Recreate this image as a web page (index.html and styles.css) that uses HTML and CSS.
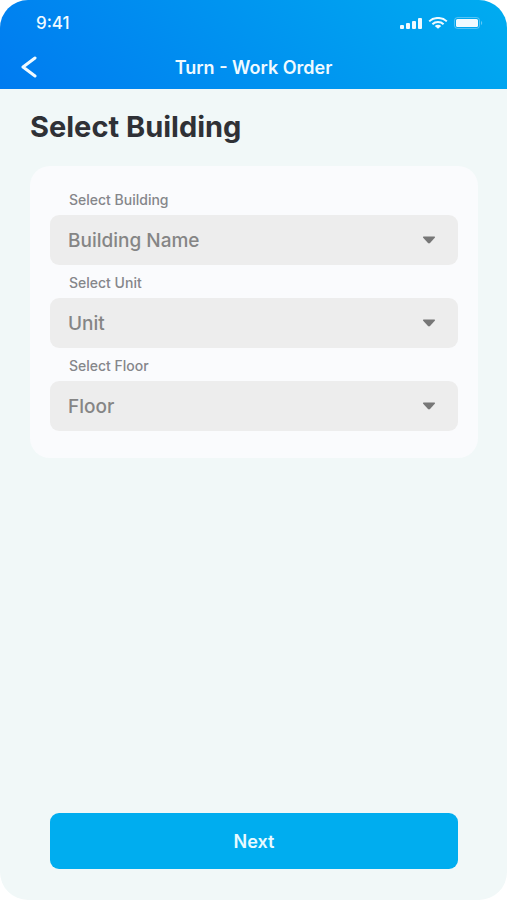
FILE: index.html
```html
<!DOCTYPE html>
<html lang="en">
<head>
<meta charset="utf-8">
<meta name="viewport" content="width=device-width, initial-scale=1">
<title>Turn - Work Order</title>
<link rel="stylesheet" href="styles.css">
</head>
<body>
<div class="screen">
  <header class="header">
    <div class="status">
      <span class="time">9:41</span>
      <div class="indicators">
        <svg width="22" height="12" viewBox="0 0 22 12" fill="currentColor" aria-hidden="true">
          <rect x="0" y="8" width="4" height="4" rx="1"/>
          <rect x="6" y="6" width="4" height="6" rx="1"/>
          <rect x="12" y="4" width="4" height="8" rx="1"/>
          <rect x="18" y="1" width="4" height="11" rx="1"/>
        </svg>
        <svg width="20" height="12" viewBox="0 0 20 12" fill="none" stroke="currentColor" stroke-width="2" aria-hidden="true">
          <path d="M1.2 4.4C6 -.2 14 -.2 18.800 4.400"/>
          <path d="M4.400 7.200C7.500 4.300 12.500 4.300 15.600 7.200"/>
          <path d="M6.800 9C8.500 7.400 11.500 7.400 13.200 9L10 11.800Z" fill="currentColor" stroke="none"/>
        </svg>
        <svg width="29" height="12" viewBox="0 0 29 12" aria-hidden="true">
          <rect x=".5" y=".5" width="25" height="11" rx="3" fill="none" stroke="currentColor" opacity=".35"/>
          <rect x="2" y="2" width="22" height="8" rx="1.500" fill="currentColor"/>
          <path d="M27 4C28.600 4.600 28.600 7.400 27 8Z" fill="currentColor" opacity=".4"/>
        </svg>
      </div>
    </div>
    <div class="nav">
      <button class="back" type="button" aria-label="Back">
        <svg width="16" height="22" viewBox="0 0 16 22" fill="none" stroke="currentColor" stroke-width="3" stroke-linecap="round" stroke-linejoin="round" aria-hidden="true"><path d="M14 2L2 11L14 20"/></svg>
      </button>
      <span class="nav-title">Turn - Work Order</span>
    </div>
  </header>
  <main class="content">
    <h1 class="title">Select Building</h1>
    <form class="form" id="location">
      <div class="field">
        <label for="building">Select Building</label>
        <div class="picker">
          <select id="building"><option>Building Name</option></select>
          <svg class="caret" width="14" height="8" viewBox="0 0 14 8" aria-hidden="true"><path d="M1.500 .5H12.500Q13.500 .8 12.800 1.800L8 7Q7 7.800 6 7L1.200 1.800Q.5 .8 1.500 .5Z"/></svg>
        </div>
      </div>
      <div class="field">
        <label for="unit">Select Unit</label>
        <div class="picker">
          <select id="unit"><option>Unit</option></select>
          <svg class="caret" width="14" height="8" viewBox="0 0 14 8" aria-hidden="true"><path d="M1.500 .5H12.500Q13.500 .8 12.800 1.800L8 7Q7 7.800 6 7L1.200 1.800Q.5 .8 1.500 .5Z"/></svg>
        </div>
      </div>
      <div class="field">
        <label for="floor">Select Floor</label>
        <div class="picker">
          <select id="floor"><option>Floor</option></select>
          <svg class="caret" width="14" height="8" viewBox="0 0 14 8" aria-hidden="true"><path d="M1.500 .5H12.500Q13.500 .8 12.800 1.800L8 7Q7 7.800 6 7L1.200 1.800Q.5 .8 1.500 .5Z"/></svg>
        </div>
      </div>
    </form>
  </main>
  <footer class="footer">
    <button class="next" type="submit" form="location">Next</button>
  </footer>
</div>
</body>
</html>
```
FILE: styles.css
```css
* {
  box-sizing: border-box;
}

body {
  margin: 0;
  background: #fff;
  color: #2f3136;
  font-family: Inter, "Liberation Sans", sans-serif;
}

button,
select {
  border: 0;
  font-family: inherit;
}

svg {
  display: block;
}

.screen {
  display: flex;
  flex-direction: column;
  min-height: 100vh;
  border-radius: 28px;
  overflow: hidden;
  background: #f1f8f8;
}

.header {
  height: 89px;
  background: linear-gradient(45deg, #007bf0, #00acf0);
  color: #f0faff;
}

.status {
  display: flex;
  align-items: center;
  justify-content: space-between;
  height: 46px;
  padding: 0 24px 0 36px;
}

.time {
  font-size: 17px;
  font-weight: 500;
}

.indicators {
  display: flex;
  gap: 6px;
}

.nav {
  display: grid;
  grid-template-columns: 48px 1fr 48px;
  align-items: center;
  height: 42px;
}

.back {
  padding: 0 0 0 21px;
  background: none;
  color: inherit;
}

.nav-title {
  font-size: 18px;
  font-weight: 600;
  text-align: center;
}

.content {
  flex: 1;
  padding: 20px 29px 20px 30px;
}

.title {
  margin: 0 0 21px;
  font-size: 29px;
  line-height: 36px;
  font-weight: 700;
}

.form {
  padding: 16px 20px 27px;
  border-radius: 20px;
  background: #fafbfd;
}

.field label {
  display: block;
  padding: 2px 19px 0;
  font-size: 14px;
  line-height: 31px;
  font-weight: 500;
  color: #85868a;
}

.picker {
  display: grid;
  align-items: center;
}

.picker > * {
  grid-area: 1 / 1;
}

.picker select {
  width: 100%;
  height: 50px;
  padding: 0 48px 0 18px;
  border-radius: 9px;
  background: #ededed;
  color: #858585;
  font-size: 19px;
  font-weight: 500;
  appearance: none;
}

.caret {
  justify-self: end;
  margin-right: 22px;
  fill: #777;
  pointer-events: none;
}

.footer {
  padding: 0 49px 31px 50px;
}

.next {
  display: block;
  width: 100%;
  height: 56px;
  border-radius: 9px;
  background: #00adef;
  color: #e8faff;
  font-size: 18px;
  font-weight: 600;
}
```
